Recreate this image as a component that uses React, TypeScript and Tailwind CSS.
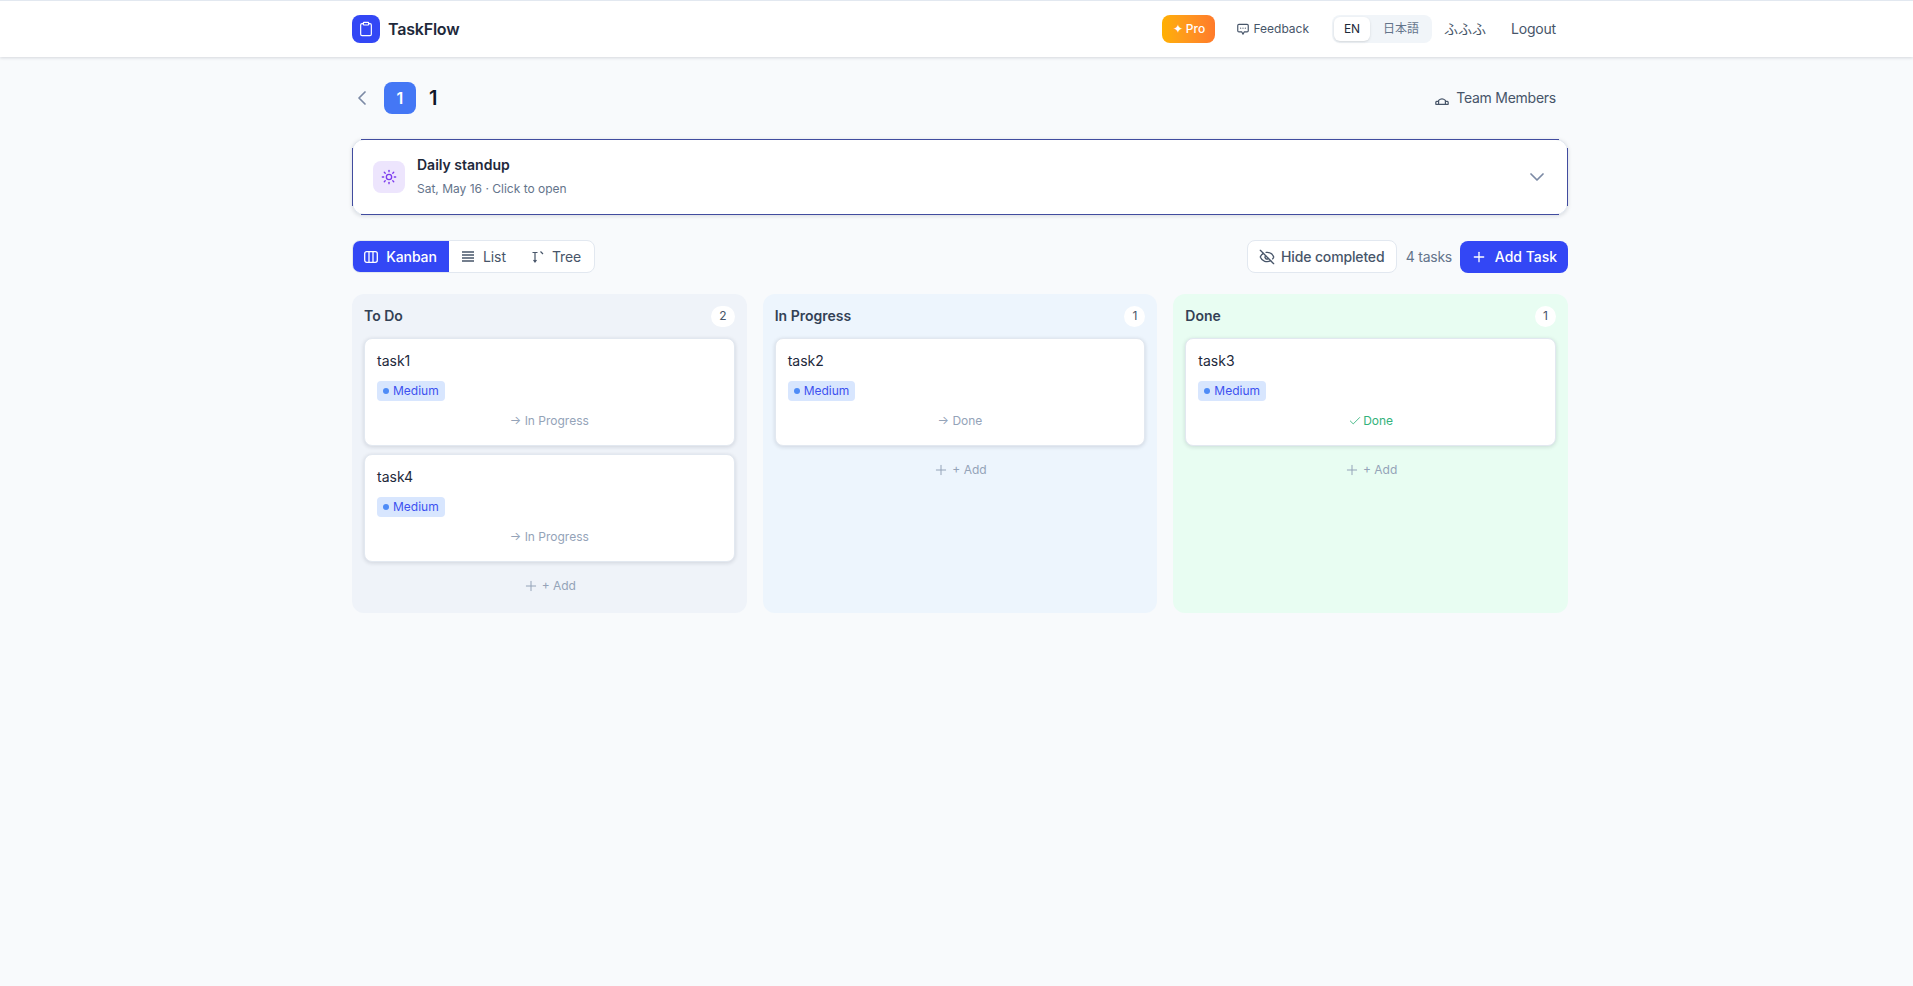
import { Check, ChevronDown, ChevronLeft, Clipboard, EyeOff, Plus, Sun } from 'lucide-react';

import React from 'react';

type Task = {
  name: string;
  next: string;
  done?: boolean;
};

type Column = {
  title: string;
  bg: string;
  tasks: Task[];
};

const columns: Column[] = [
  {
    title: 'To Do',
    bg: 'bg-[#eff3f9]',
    tasks: [
      { name: 'task1', next: 'In Progress' },
      { name: 'task4', next: 'In Progress' },
    ],
  },
  {
    title: 'In Progress',
    bg: 'bg-[#edf5fd]',
    tasks: [{ name: 'task2', next: 'Done' }],
  },
  {
    title: 'Done',
    bg: 'bg-[#e8fdf2]',
    tasks: [{ name: 'task3', next: 'Done', done: true }],
  },
];

function TaskCard({ task }: { task: Task }) {
  return (
    <div className="flex h-[108px] flex-col rounded-lg border border-[#e2e8f0] bg-white px-3 pt-3 shadow-[0_1px_4px_rgba(15,23,42,0.14)]">
      <div className="text-sm leading-5 text-[#1e293b]">{task.name}</div>
      <div className="mt-2.5 flex">
        <span className="flex h-5 items-center gap-1 rounded bg-[#d8e6fe] px-1.5 text-xs text-[#3d52f0]">
          <span className="h-1.5 w-1.5 rounded-full bg-[#4f8cf7]" />
          Medium
        </span>
      </div>
      {task.done ? (
        <div className="mt-3 flex items-center justify-center gap-px text-xs leading-4 text-[#34b27b]">
          <Check className="h-3.5 w-3.5" strokeWidth={1.5} />
          Done
        </div>
      ) : (
        <div className="mt-3 text-center text-xs leading-4 text-[#94a3b8]">→ {task.next}</div>
      )}
    </div>
  );
}

function KanbanColumn({ column }: { column: Column }) {
  return (
    <div className={`${column.bg} rounded-xl p-3`}>
      <div className="mb-3 flex h-5 items-center justify-between">
        <span className="text-sm font-semibold text-[#334155]">{column.title}</span>
        <span className="flex h-[21px] items-center justify-center rounded-full bg-white px-2 text-xs text-[#475569]">
          {column.tasks.length}
        </span>
      </div>
      <div className="flex flex-col gap-2">
        {column.tasks.map((task) => (
          <TaskCard key={task.name} task={task} />
        ))}
      </div>
      <button className="mt-2 flex h-[31px] w-full items-center justify-center gap-[3px] text-xs text-[#94a3b8]">
        <Plus className="h-4 w-4" strokeWidth={1.5} />+ Add
      </button>
    </div>
  );
}

function App() {
  return (
    <div className="min-h-[986px] bg-[#f8fafc] font-['Inter',sans-serif]">
      <header className="h-[57px] border-t border-[#e2e8f0] bg-white shadow-[0_1px_3px_rgba(15,23,42,0.15)]">
        <div className="ml-[352px] flex h-full w-[1216px] items-center justify-between">
          <div className="flex items-center gap-2">
            <div className="flex h-7 w-7 items-center justify-center rounded-lg bg-[#3347f5]">
              <Clipboard className="h-4 w-4 text-white" strokeWidth={1.75} />
            </div>
            <span className="text-base font-semibold tracking-[-0.2px] text-[#1e293b]">TaskFlow</span>
          </div>
          <div className="flex items-center">
            <button className="flex h-7 w-[53px] items-center justify-center gap-1 rounded-lg bg-gradient-to-r from-[#ffb000] to-[#ff7a2a] text-xs font-medium text-white">
              ✦ Pro
            </button>
            <button className="ml-[21px] flex items-center gap-[3px] text-xs text-[#475569]">
              <svg width="14" height="14" viewBox="0 0 24 24" fill="none" stroke="currentColor" strokeWidth="2" strokeLinecap="round" strokeLinejoin="round">
                <path d="M21 15a2 2 0 0 1-2 2h-5l-2 4-2-4H5a2 2 0 0 1-2-2V6a2 2 0 0 1 2-2h14a2 2 0 0 1 2 2z" />
                <path d="M8 10.5h.01M12 10.5h.01M16 10.5h.01" />
              </svg>
              Feedback
            </button>
            <div className="ml-[23px] flex h-7 w-[100px] items-center rounded-lg bg-[#f1f5f9] p-0.5 font-['Inter','Noto_Sans_CJK_JP',sans-serif] text-xs">
              <span className="flex h-6 w-9 items-center justify-center rounded-md bg-white text-[#1e293b] shadow-sm">EN</span>
              <span className="flex h-6 flex-1 items-center justify-center pl-0.5 text-[#64748b]">日本語</span>
            </div>
            <span className="ml-3 font-['Inter','Noto_Sans_CJK_JP',sans-serif] text-sm text-[#475569]">ふふふ</span>
            <button className="ml-[25px] mr-3 text-sm tracking-[-0.2px] text-[#475569]">Logout</button>
          </div>
        </div>
      </header>

      <main className="ml-[352px] w-[1216px]">
        <div className="mt-[25px] flex h-8 items-center justify-between">
          <div className="flex items-center">
            <ChevronLeft className="-ml-0.5 h-6 w-6 text-[#7c8aa5]" strokeWidth={1.75} />
            <div className="ml-2.5 flex h-8 w-8 items-center justify-center rounded-lg bg-[#4477f5] text-base font-semibold text-white">
              1
            </div>
            <h1 className="ml-[13px] text-xl font-semibold text-[#0f172a]">1</h1>
          </div>
          <button className="mr-3 flex items-center gap-[7px] text-sm tracking-[-0.25px] text-[#475569]">
            <svg width="14" height="8" viewBox="0 0 14 8" fill="none" stroke="#475569" strokeWidth="1.2" className="mt-1.5">
              <path d="M.6 7.4h12.8M.8 7.4V5.6Q.8 4.2 3 4.2M13.2 7.4V5.6q0-1.4-2.2-1.4M3.6 7.2V3.4Q7 .2 10.4 3.4v3.8" />
            </svg>
            Team Members
          </button>
        </div>

        <div className="relative mt-[25px] flex h-[76px] items-center justify-between rounded-xl border border-[#e2e8f0] bg-white pl-5 pr-[18px] shadow-[0_1px_4px_rgba(15,23,42,0.14)]">
          <span className="absolute inset-x-2 -inset-y-px border-y border-[#414c9f]" />
          <span className="absolute -inset-x-px inset-y-2 border-x border-[#414c9f]" />
          <div className="flex items-center gap-3">
            <div className="flex h-8 w-8 items-center justify-center rounded-lg bg-[#ede5fd]">
              <Sun className="h-4 w-4 text-[#7c3aed]" />
            </div>
            <div className="-mt-0.5">
              <div className="text-sm font-semibold text-[#1e293b]">Daily standup</div>
              <div className="mt-1.5 text-xs text-[#64748b]">Sat, May 16 · Click to open</div>
            </div>
          </div>
          <ChevronDown className="h-6 w-6 text-[#7c8aa5]" strokeWidth={1.75} />
        </div>

        <div className="mt-[25px] flex h-[33px] items-center justify-between">
          <div className="flex h-[33px] w-[243px] overflow-hidden rounded-lg border border-[#e2e8f0] bg-white text-sm tracking-[-0.1px] text-[#475569]">
            <button className="-m-px flex h-[33px] w-[97px] items-center justify-center gap-2 bg-[#3347f5] font-medium text-white">
              <svg width="14" height="12" viewBox="0 0 14 12" fill="none" stroke="currentColor" strokeWidth="1.3">
                <rect x="0.7" y="0.7" width="12.6" height="10.6" rx="2" />
                <path d="M5 .7v10.6M9 .7v10.6" />
              </svg>
              Kanban
            </button>
            <button className="ml-[14px] flex items-center gap-[9px]">
              <svg width="12" height="11" viewBox="0 0 12 11" fill="none" stroke="currentColor" strokeWidth="1.4">
                <path d="M0 1h12M0 4h12M0 7h12M0 10h12" />
              </svg>
              List
            </button>
            <button className="ml-[26px] flex items-center gap-2">
              <svg width="12" height="12" viewBox="0 0 12 12" fill="none" stroke="currentColor" strokeWidth="1.2">
                <path d="M0.5 1.5h5M3 1.5v9M1.5 9l1.5 2 1.5-2M8.5 .5l2.5 2.5" />
              </svg>
              Tree
            </button>
          </div>
          <div className="flex items-center">
            <button className="flex h-[33px] w-[150px] items-center justify-center gap-1.5 rounded-lg border border-[#e2e8f0] bg-white text-sm font-medium tracking-[-0.15px] text-[#475569]">
              <EyeOff className="h-4 w-4" />
              Hide completed
            </button>
            <span className="ml-[9px] text-sm tracking-[-0.25px] text-[#64748b]">4 tasks</span>
            <button className="ml-2 flex h-8 w-[108px] items-center justify-center gap-2 rounded-lg bg-[#3347f5] text-sm font-medium text-white">
              <Plus className="h-4 w-4" />
              Add Task
            </button>
          </div>
        </div>

        <div className="mt-[21px] grid grid-cols-3 items-stretch gap-4">
          {columns.map((column) => (
            <KanbanColumn key={column.title} column={column} />
          ))}
        </div>
      </main>
    </div>
  );
}

export default App;
